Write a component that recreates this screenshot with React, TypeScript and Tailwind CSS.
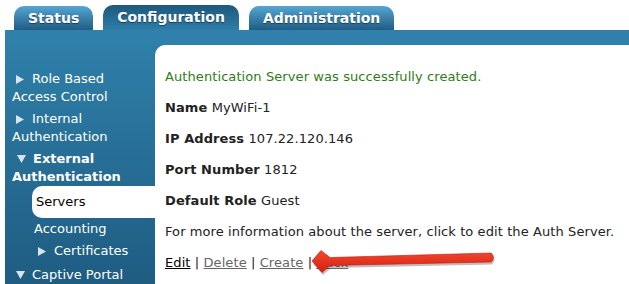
import React from 'react';

const RightTri = () => (
  <svg width="8" height="9" viewBox="0 0 8 9" className="inline-block align-[-1px] ml-[4px] mr-[8px]">
    <polygon points="0,0 8,4.5 0,9" fill="#dbe3ea" />
  </svg>
);

const DownTri = () => (
  <svg width="9" height="8" viewBox="0 0 9 8" className="inline-block align-[0px] ml-[5px] mr-[7px]">
    <polygon points="0,0 9,0 4.5,8" fill="#dbe3ea" />
  </svg>
);

const tabs = [
  { label: 'Status', active: false },
  { label: 'Configuration', active: true },
  { label: 'Administration', active: false },
];

const rows: [string, string][] = [
  ['Name', 'MyWiFi-1'],
  ['IP Address', '107.22.120.146'],
  ['Port Number', '1812'],
  ['Default Role', 'Guest'],
];

export default function App() {
  return (
    <div className="relative w-[629px] h-[284px] overflow-hidden bg-white font-['DejaVu_Sans',Verdana,sans-serif]">
      {/* tabs */}
      <div className="flex h-[30px] items-end gap-[10px] pl-[14px]">
        {tabs.map((t) => (
          <div
            key={t.label}
            className={
              t.active
                ? 'h-[25px] px-[14px] rounded-t-[10px] bg-gradient-to-b from-[#1d587d] to-[#2e7ea8] text-white font-bold text-[14px] leading-[25px] [text-shadow:0_1px_1px_rgba(0,0,0,0.45)]'
                : 'h-[24px] px-[14px] rounded-t-[10px] bg-gradient-to-b from-[#55a7d2] to-[#1f5d85] text-white font-bold text-[14px] leading-[25px] [text-shadow:0_1px_1px_rgba(0,0,0,0.45)]'
            }
          >
            {t.label}
          </div>
        ))}
      </div>

      <div className="ml-[5px] h-[254px] flex flex-col bg-gradient-to-b from-[#2f81ab] to-[#1f5c82]">
        <div className="h-[15px] bg-[#2f80aa]" />
        <div className="flex flex-1">
          {/* sidebar */}
          <div className="w-[150px] shrink-0 pt-[25px] text-white text-[13px] leading-[18px]">
            <div className="pl-[7px] mb-[4px]">
              <RightTri />Role Based<br />Access Control
            </div>
            <div className="pl-[7px] mb-[4px]">
              <RightTri />Internal<br />Authentication
            </div>
            <div className="pl-[7px] font-bold">
              <DownTri />External<br />Authentication
            </div>
            <div className="ml-[27px] h-[32px] flex items-center pl-[4px] rounded-l-[10px] bg-white text-black">
              Servers
            </div>
            <div className="pl-[29px] mt-[2px]">Accounting</div>
            <div className="pl-[29px] mt-[4px]">
              <RightTri />Certificates
            </div>
            <div className="pl-[6px] mt-[6px]">
              <DownTri />Captive Portal
            </div>
          </div>

          {/* content */}
          <div className="flex-1 bg-white rounded-tl-[10px] pt-[16px] pl-[10px] text-[13px] leading-[31px] tracking-[0.09px] text-[#222]">
            <p className="text-[#2f7c15]">Authentication Server was successfully created.</p>
            {rows.map(([k, v]) => (
              <p key={k}>
                <span className="font-bold">{k}</span> {v}
              </p>
            ))}
            <p>For more information about the server, click to edit the Auth Server.</p>
            <p>
              <span className="underline text-black">Edit</span> |{' '}
              <span className="underline text-[#666]">Delete</span> |{' '}
              <span className="underline text-[#666]">Create</span> |{' '}
              <span className="underline text-[#666]">Back</span>
            </p>
          </div>
        </div>
      </div>

      {/* annotation arrow */}
      <svg className="absolute left-0 top-0" width="629" height="284" viewBox="0 0 629 284">
        <defs>
          <linearGradient id="arrowRed" x1="0" y1="0" x2="0" y2="1">
            <stop offset="0" stopColor="#f24a32" />
            <stop offset="1" stopColor="#d41d0e" />
          </linearGradient>
        </defs>
        <path
          d="M312,262 L321,251 L330,258 L491,253.5 Q496,258 491,262.5 L330,266 L322,273 Z"
          fill="#000"
          opacity="0.25"
          transform="translate(1,2)"
        />
        <path
          d="M312,261 L321,250.5 L330,257.5 L491,253 Q496,257.5 491,262 L330,265.5 L322,272.5 Z"
          fill="url(#arrowRed)"
          stroke="#c41a0c"
          strokeWidth="0.6"
          strokeLinejoin="round"
        />
      </svg>
    </div>
  );
}
